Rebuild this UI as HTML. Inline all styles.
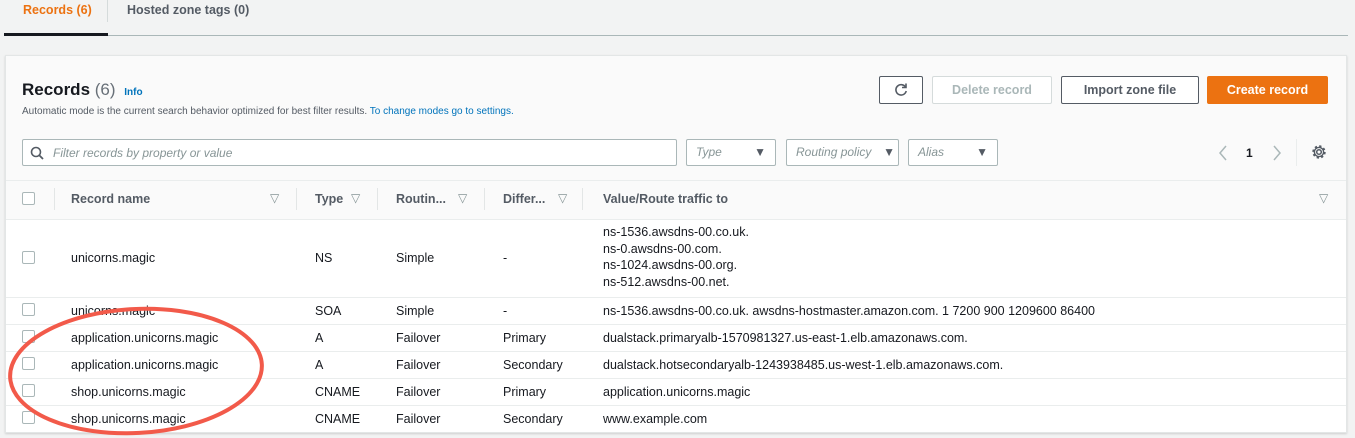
<!DOCTYPE html>
<html><head><style>
*{box-sizing:border-box;margin:0;padding:0}
body{width:1355px;height:438px;background:#f2f3f3;font-family:"Liberation Sans",sans-serif;font-size:12px;color:#16191f;position:relative;overflow:hidden}
.a{position:absolute}
.tab{top:3px;font-weight:bold;font-size:12.5px}
.card{left:5px;top:55px;width:1342px;height:378px;background:#fff;border:1px solid #e3e6e6;box-shadow:0 1px 2px rgba(0,0,0,.15)}
.btn{top:76px;height:28px;border:1px solid #545b64;border-radius:2px;font-weight:bold;font-size:12.5px;text-align:center;line-height:26px;color:#545b64;background:#fff}
.sel{top:139px;height:27px;border:1px solid #aab7b8;border-radius:2px;font-style:italic;color:#879596;padding-left:9px;line-height:25px;background:#fff}
.sel b{position:absolute;right:9px;top:0;font-style:normal;color:#545b64;font-size:12px}
.cb{width:13px;height:13px;border:1px solid #aab7b8;border-radius:2px;background:#fff;left:22px}
.hd{top:192px;font-weight:bold;color:#545b64;font-size:12.5px}
.fi{top:191px;color:#879596;font-size:12px}
.dv{top:188px;width:1px;height:22px;background:#e3e6e6}
.hl{left:6px;width:1340px;height:1px;background:#eaeded}
.c{font-size:12.5px}
</style></head><body>
<div class="a tab" style="left:23px;color:#ec7211">Records (6)</div>
<div class="a" style="left:107px;top:0;width:1px;height:22px;background:#d5dbdb"></div>
<div class="a tab" style="left:127px;color:#545b64">Hosted zone tags (0)</div>
<div class="a" style="left:4px;top:33px;width:104px;height:3px;background:#16191f"></div>
<div class="a" style="left:108px;top:35px;width:1240px;height:1px;background:#aab7b8"></div>
<div class="a card"></div>
<div class="a" style="left:6px;top:56px;width:1340px;height:163px;background:#fafafa"></div>
<div class="a" style="left:22px;top:80px;font-size:17px;font-weight:bold">Records <span style="font-weight:normal;color:#687078">(6)</span> <span style="font-size:10px;color:#0073bb;margin-left:4px">Info</span></div>
<div class="a" style="left:22px;top:106px;font-size:10px;color:#545b64">Automatic mode is the current search behavior optimized for best filter results. <span style="color:#0073bb">To change modes go to settings.</span></div>
<div class="a btn" style="left:879px;width:44px"></div>
<svg class="a" style="left:893px;top:82px" width="16" height="16" viewBox="0 0 16 16"><path d="M12.5 5A5.2 5.2 0 1 0 13.2 9" fill="none" stroke="#545b64" stroke-width="1.6"/><path d="M13 1.5V5.5H9" fill="none" stroke="#545b64" stroke-width="1.6"/></svg>
<div class="a btn" style="left:932px;width:120px;border-color:#d5dbdb;color:#aab7b8">Delete record</div>
<div class="a btn" style="left:1061px;width:138px">Import zone file</div>
<div class="a btn" style="left:1207px;width:121px;background:#ec7211;border-color:#ec7211;color:#fff">Create record</div>
<div class="a" style="left:22px;top:139px;width:655px;height:27px;border:1px solid #aab7b8;border-radius:2px;background:#fff"></div>
<svg class="a" style="left:30px;top:146px" width="14" height="14"><circle cx="6" cy="6" r="4.5" fill="none" stroke="#545b64" stroke-width="1.6"/><path d="M9.5 9.5L13 13" stroke="#545b64" stroke-width="1.8"/></svg>
<div class="a" style="left:53px;top:146px;font-style:italic;color:#879596">Filter records by property or value</div>
<div class="a sel" style="left:686px;width:90px">Type<b>▼</b></div>
<div class="a sel" style="left:786px;width:113px">Routing policy<b style="right:3px">▼</b></div>
<div class="a sel" style="left:908px;width:90px">Alias<b>▼</b></div>
<svg class="a" style="left:1218px;top:145px" width="10" height="16"><path d="M8 1L2 8L8 15" fill="none" stroke="#aab7b8" stroke-width="1.5"/></svg>
<div class="a" style="left:1246px;top:146px;font-weight:bold">1</div>
<svg class="a" style="left:1272px;top:145px" width="10" height="16"><path d="M2 1L8 8L2 15" fill="none" stroke="#aab7b8" stroke-width="1.5"/></svg>
<div class="a" style="left:1296px;top:139px;width:1px;height:27px;background:#eaeded"></div>
<svg class="a" style="left:1311px;top:144px" width="16" height="16" viewBox="0 0 16 16"><circle cx="8" cy="8" r="2.3" fill="none" stroke="#545b64" stroke-width="1.5"/><circle cx="8" cy="8" r="5.6" fill="none" stroke="#545b64" stroke-width="2.2" stroke-dasharray="2.2 2.2"/><circle cx="8" cy="8" r="4.6" fill="none" stroke="#545b64" stroke-width="1.4"/></svg>
<div class="a hl" style="top:180px"></div>
<div class="a cb" style="top:192px"></div>
<div class="a dv" style="left:54px"></div><div class="a hd" style="left:71px">Record name</div><div class="a fi" style="left:270px">▽</div>
<div class="a dv" style="left:296px"></div><div class="a hd" style="left:315px">Type</div><div class="a fi" style="left:351px">▽</div>
<div class="a dv" style="left:377px"></div><div class="a hd" style="left:396px">Routin...</div><div class="a fi" style="left:458px">▽</div>
<div class="a dv" style="left:484px"></div><div class="a hd" style="left:503px">Differ...</div><div class="a fi" style="left:558px">▽</div>
<div class="a dv" style="left:582px"></div><div class="a hd" style="left:603px">Value/Route traffic to</div><div class="a fi" style="left:1319px">▽</div>
<div class="a hl" style="top:219px"></div>
<div class="a c" style="left:603px;top:224px;line-height:16.5px">ns-1536.awsdns-00.co.uk.<br>ns-0.awsdns-00.com.<br>ns-1024.awsdns-00.org.<br>ns-512.awsdns-00.net.</div>
<div class="a cb" style="top:251px"></div><div class="a c" style="left:71px;top:251px">unicorns.magic</div><div class="a c" style="left:315px;top:251px">NS</div><div class="a c" style="left:396px;top:251px">Simple</div><div class="a c" style="left:503px;top:251px">-</div>
<div class="a hl" style="top:297px"></div>
<div class="a cb" style="top:303px"></div><div class="a c" style="left:71px;top:304px">unicorns.magic</div><div class="a c" style="left:315px;top:304px">SOA</div><div class="a c" style="left:396px;top:304px">Simple</div><div class="a c" style="left:503px;top:304px">-</div><div class="a c" style="left:603px;top:304px">ns-1536.awsdns-00.co.uk. awsdns-hostmaster.amazon.com. 1 7200 900 1209600 86400</div>
<div class="a hl" style="top:324px"></div>
<div class="a cb" style="top:330px"></div><div class="a c" style="left:71px;top:331px">application.unicorns.magic</div><div class="a c" style="left:315px;top:331px">A</div><div class="a c" style="left:396px;top:331px">Failover</div><div class="a c" style="left:503px;top:331px">Primary</div><div class="a c" style="left:603px;top:331px">dualstack.primaryalb-1570981327.us-east-1.elb.amazonaws.com.</div>
<div class="a hl" style="top:351px"></div>
<div class="a cb" style="top:357px"></div><div class="a c" style="left:71px;top:358px">application.unicorns.magic</div><div class="a c" style="left:315px;top:358px">A</div><div class="a c" style="left:396px;top:358px">Failover</div><div class="a c" style="left:503px;top:358px">Secondary</div><div class="a c" style="left:603px;top:358px">dualstack.hotsecondaryalb-1243938485.us-west-1.elb.amazonaws.com.</div>
<div class="a hl" style="top:378px"></div>
<div class="a cb" style="top:384px"></div><div class="a c" style="left:71px;top:385px">shop.unicorns.magic</div><div class="a c" style="left:315px;top:385px">CNAME</div><div class="a c" style="left:396px;top:385px">Failover</div><div class="a c" style="left:503px;top:385px">Primary</div><div class="a c" style="left:603px;top:385px">application.unicorns.magic</div>
<div class="a hl" style="top:405px"></div>
<div class="a cb" style="top:411px"></div><div class="a c" style="left:71px;top:412px">shop.unicorns.magic</div><div class="a c" style="left:315px;top:412px">CNAME</div><div class="a c" style="left:396px;top:412px">Failover</div><div class="a c" style="left:503px;top:412px">Secondary</div><div class="a c" style="left:603px;top:412px">www.example.com</div>
<svg class="a" style="left:0;top:290px" width="280" height="148"><ellipse cx="136" cy="81" rx="126" ry="62" transform="rotate(-3 136 81)" fill="none" stroke="#f25a4a" stroke-width="4"/></svg>
</body></html>
